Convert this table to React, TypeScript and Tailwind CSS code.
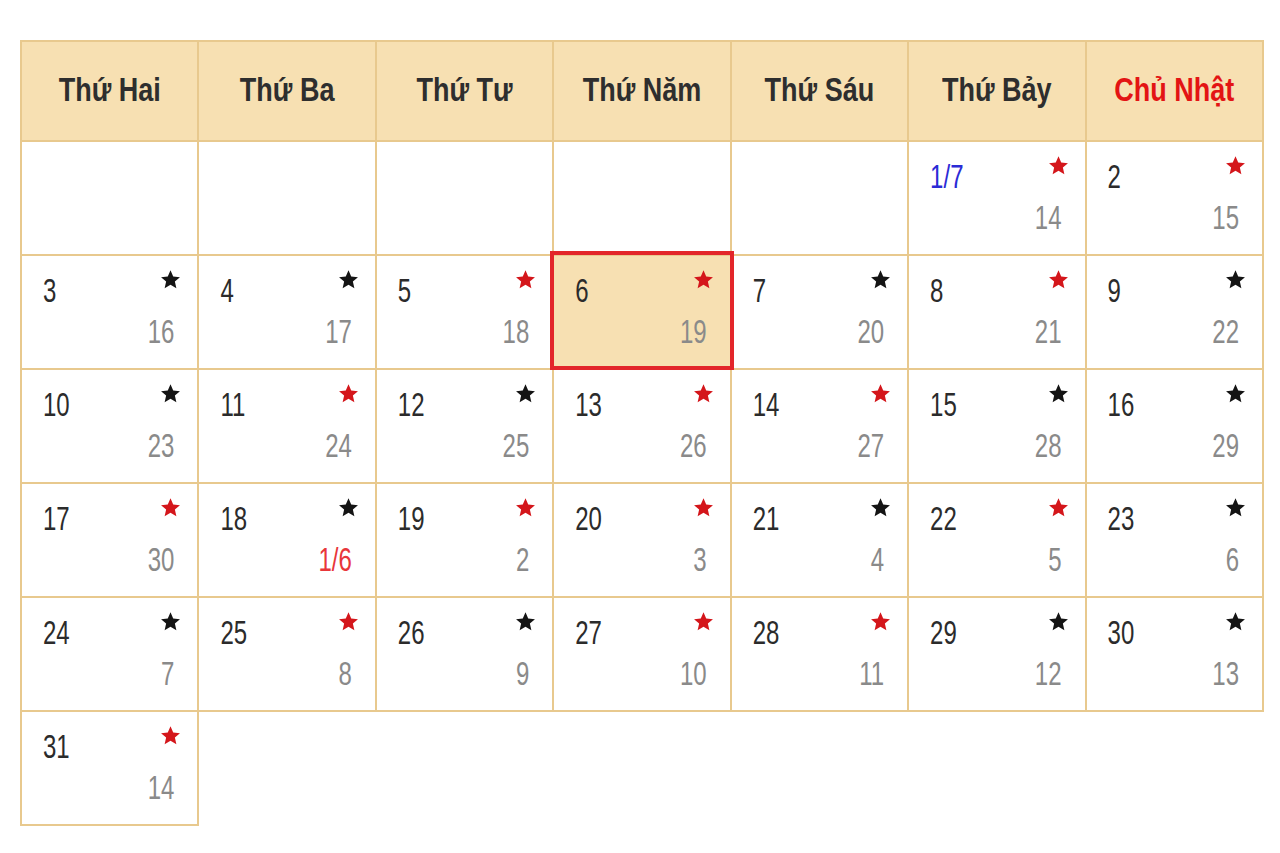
const headers = ['Thứ Hai', 'Thứ Ba', 'Thứ Tư', 'Thứ Năm', 'Thứ Sáu', 'Thứ Bảy', 'Chủ Nhật'];

type Day = {
	solar: string;
	lunar: string;
	red: boolean;
	solarClass?: string;
	lunarClass?: string;
	today?: boolean;
} | null;

const weeks: Day[][] = [
	[
		null,
		null,
		null,
		null,
		null,
		{ solar: '1/7', lunar: '14', red: true, solarClass: 'text-[#2b2bd6]' },
		{ solar: '2', lunar: '15', red: true },
	],
	[
		{ solar: '3', lunar: '16', red: false },
		{ solar: '4', lunar: '17', red: false },
		{ solar: '5', lunar: '18', red: true },
		{ solar: '6', lunar: '19', red: true, today: true },
		{ solar: '7', lunar: '20', red: false },
		{ solar: '8', lunar: '21', red: true },
		{ solar: '9', lunar: '22', red: false },
	],
	[
		{ solar: '10', lunar: '23', red: false },
		{ solar: '11', lunar: '24', red: true },
		{ solar: '12', lunar: '25', red: false },
		{ solar: '13', lunar: '26', red: true },
		{ solar: '14', lunar: '27', red: true },
		{ solar: '15', lunar: '28', red: false },
		{ solar: '16', lunar: '29', red: false },
	],
	[
		{ solar: '17', lunar: '30', red: true },
		{ solar: '18', lunar: '1/6', red: false, lunarClass: 'text-[#e8363a]' },
		{ solar: '19', lunar: '2', red: true },
		{ solar: '20', lunar: '3', red: true },
		{ solar: '21', lunar: '4', red: false },
		{ solar: '22', lunar: '5', red: true },
		{ solar: '23', lunar: '6', red: false },
	],
	[
		{ solar: '24', lunar: '7', red: false },
		{ solar: '25', lunar: '8', red: true },
		{ solar: '26', lunar: '9', red: false },
		{ solar: '27', lunar: '10', red: true },
		{ solar: '28', lunar: '11', red: true },
		{ solar: '29', lunar: '12', red: false },
		{ solar: '30', lunar: '13', red: false },
	],
];

function Star({ red }: { red: boolean }) {
	return (
		<svg width="21" height="21" viewBox="0 0 24 24" className="mr-[16px] mt-[13px]">
			<polygon
				points="12,1.5 15.1,8.6 22.8,9.3 17,14.4 18.7,22 12,18 5.3,22 7,14.4 1.2,9.3 8.9,8.6"
				fill={red ? '#d4161b' : '#141414'}
			/>
		</svg>
	);
}

function DayCell({ day }: { day: NonNullable<Day> }) {
	return (
		<td
			className={
				'relative h-[114px] border-2 border-[#e8c98e] p-0 align-top ' +
				(day.today ? 'bg-[#f7e0b2]' : 'bg-white')
			}
		>
			<div className="flex h-[112px] flex-col">
				<div className="flex items-start justify-between">
					<span
						className={
							'ml-[21px] mt-[23px] inline-block scale-y-[1.4] text-[24px] leading-none ' +
							(day.solarClass ?? 'text-[#2b2b2b]')
						}
					>
						{day.solar}
					</span>
					<Star red={day.red} />
				</div>
				<div className="mt-auto mb-[21px] mr-[23px] text-right">
					<span
						className={
							'inline-block scale-y-[1.4] text-[24px] leading-none ' +
							(day.lunarClass ?? 'text-[#8a8a8a]')
						}
					>
						{day.lunar}
					</span>
				</div>
			</div>
			{day.today && (
				<div className="absolute -top-[5px] -bottom-[2px] -left-[4px] -right-[4px] z-10 border-4 border-[#e3262a]" />
			)}
		</td>
	);
}

export default function App() {
	return (
		<div className="min-h-[853px] bg-white pt-[40px] pl-[20px] font-['Liberation_Sans',Arial,sans-serif]">
			<table className="w-[1244px] table-fixed border-collapse">
				<thead>
					<tr>
						{headers.map((h, i) => (
							<th
								key={h}
								className="h-[100px] border-2 border-[#e8c98e] bg-[#f7e0b2] p-0 text-center align-middle"
							>
								<span
									className={
										'inline-block scale-y-[1.25] text-[27px] font-bold leading-none ' +
										(i === 6 ? 'text-[#e31414]' : 'text-[#2e2e2e]')
									}
								>
									{h}
								</span>
							</th>
						))}
					</tr>
				</thead>
				<tbody>
					{weeks.map((week, wi) => (
						<tr key={wi}>
							{week.map((day, di) =>
								day ? (
									<DayCell key={di} day={day} />
								) : (
									<td key={di} className="h-[114px] border-2 border-[#e8c98e] bg-white p-0" />
								),
							)}
						</tr>
					))}
					<tr>
						<DayCell day={{ solar: '31', lunar: '14', red: true }} />
					</tr>
				</tbody>
			</table>
		</div>
	);
}
